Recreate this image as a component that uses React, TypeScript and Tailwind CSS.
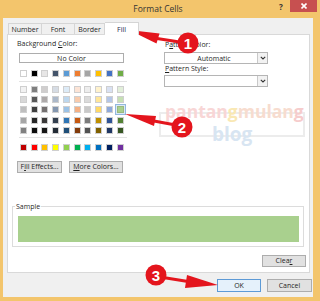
import React from "react";

const themeRow = ["#FFFFFF", "#000000", "#E7E6E6", "#44546A", "#5B9BD5", "#ED7D31", "#A5A5A5", "#FFC000", "#4472C4", "#70AD47"];
const tints = [
  ["#F2F2F2", "#7F7F7F", "#D0CECE", "#D6DCE4", "#DDEBF7", "#FCE4D6", "#EDEDED", "#FFF2CC", "#D9E1F2", "#E2EFDA"],
  ["#D9D9D9", "#595959", "#AEAAAA", "#ACB9CA", "#BDD7EE", "#F8CBAD", "#DBDBDB", "#FFE699", "#B4C6E7", "#C6E0B4"],
  ["#BFBFBF", "#404040", "#757171", "#8497B0", "#9BC2E6", "#F4B084", "#C9C9C9", "#FFD966", "#8EA9DB", "#A9D08E"],
  ["#A6A6A6", "#262626", "#3A3838", "#333F4F", "#2F75B5", "#C65911", "#7B7B7B", "#BF8F00", "#305496", "#548235"],
  ["#808080", "#0D0D0D", "#161616", "#222B35", "#1F4E78", "#833C0C", "#525252", "#806000", "#203764", "#375623"],
];
const standard = ["#C00000", "#FF0000", "#FFC000", "#FFFF00", "#92D050", "#00B050", "#00B0F0", "#0070C0", "#002060", "#7030A0"];

function Swatch({ color, selected }: { color: string; selected?: boolean }) {
  return (
    <div
      className={
        selected
          ? "w-[7px] h-[7px] border border-[#9ab97f] shadow-[0_0_0_1px_#dbe9f6,0_0_0_2px_#93b8de]"
          : "w-[7px] h-[7px] border border-[#cfcfcf]"
      }
      style={{ backgroundColor: color }}
    />
  );
}

function SwatchRow({ colors, selectedIndex }: { colors: string[]; selectedIndex?: number }) {
  return (
    <div className="grid grid-cols-[repeat(10,7px)] gap-x-[3.74px]">
      {colors.map((c, i) => (
        <Swatch key={i} color={c} selected={i === selectedIndex} />
      ))}
    </div>
  );
}

function Dropdown({ value }: { value?: string }) {
  return (
    <div className="flex w-[104px] h-[12px] border border-[#b5b5b5] bg-white">
      <div className="flex-1 flex items-center justify-center text-[7px] leading-none pl-[6px]">{value}</div>
      <div className="w-[10px] h-full border-l border-[#c9c9c9] bg-[#f2f2f2] flex items-center justify-center">
        <svg width="6" height="4" viewBox="0 0 6 4">
          <path d="M0.8 0.8 L3 3 L5.2 0.8" fill="none" stroke="#333" strokeWidth="1.1" />
        </svg>
      </div>
    </div>
  );
}

function Button({ children, className }: { children: React.ReactNode; className: string }) {
  return (
    <div className={"flex items-center justify-center text-[7px] leading-none border " + className}>
      {children}
    </div>
  );
}

export default function App() {
  return (
    <div className="relative w-[320px] h-[301px] overflow-hidden bg-[#f3c56c] font-['Open_Sans',sans-serif] text-[#1f1f1f]">
      {/* title bar */}
      <div className="relative h-[18px] flex items-center justify-center pr-[4px]">
        <span className="text-[8.5px] leading-none text-[#333]">Format Cells</span>
        <span className="absolute left-[279px] top-[3px] text-[8px] leading-none font-bold text-[#333]">?</span>
        <div className="absolute left-[290px] top-0 w-[27px] h-[12px] bg-[#c75050] flex items-center justify-center">
          <svg width="6" height="6" viewBox="0 0 6 6">
            <path d="M0.5 0.5 L5.5 5.5 M5.5 0.5 L0.5 5.5" stroke="#fff" strokeWidth="1.6" />
          </svg>
        </div>
      </div>

      {/* dialog body */}
      <div className="ml-[3px] w-[310px] h-[279px] bg-[#f0f0f0] pt-[4px] pl-[4px]">
        {/* tabs */}
        <div className="flex items-end h-[12px] ml-[1px]">
          <div className="w-[34px] h-[11px] border border-b-0 border-[#d5d5d5] bg-[#f0f0f0] flex items-center justify-center text-[7px] leading-none">
            Number
          </div>
          <div className="w-[33px] h-[11px] border border-l-0 border-b-0 border-[#d5d5d5] bg-[#f0f0f0] flex items-center justify-center text-[7px] leading-none">
            Font
          </div>
          <div className="w-[30px] h-[11px] border border-l-0 border-b-0 border-[#d5d5d5] bg-[#f0f0f0] flex items-center justify-center text-[7px] leading-none">
            Border
          </div>
          <div className="relative z-10 w-[34px] h-[13px] -mb-px border border-l-0 border-b-0 border-[#d5d5d5] bg-white flex items-center justify-center text-[7px] leading-none text-[#1a2b4a]">
            Fill
          </div>
        </div>

        {/* tab panel */}
        <div className="w-[303px] h-[239px] border border-[#d9d9d9] bg-white">
          <div className="flex pt-[4px] pl-[9px]">
            {/* background colour picker */}
            <div className="w-[147px] flex flex-col">
              <div className="h-[10px] text-[7px] leading-[10px]">
                Background <span className="underline">C</span>olor:
              </div>
              <div className="mt-[4px] ml-[2px] w-[105px] h-[10px] border border-[#adadad] flex items-center justify-center text-[7px] leading-none">
                No Color
              </div>
              <div className="mt-[7px] ml-[3px]">
                <SwatchRow colors={themeRow} />
              </div>
              <div className="mt-[4px] ml-[2px] w-[108px] h-px bg-[#e3e3e3]" />
              <div className="mt-[4px] ml-[3px] flex flex-col gap-y-[3.2px]">
                {tints.map((row, r) => (
                  <SwatchRow key={r} colors={row} selectedIndex={r === 2 ? 9 : undefined} />
                ))}
              </div>
              <div className="mt-[3px] ml-[2px] w-[108px] h-px bg-[#e3e3e3]" />
              <div className="mt-[6px] ml-[3px]">
                <SwatchRow colors={standard} />
              </div>
              <div className="mt-[10px] flex gap-[7px]">
                <Button className="w-[45px] h-[12px] border-[#adadad] bg-[#e1e1e1]">
                  F<span className="underline">i</span>ll Effects...
                </Button>
                <Button className="w-[54px] h-[12px] border-[#adadad] bg-[#e1e1e1]">
                  <span className="underline">M</span>ore Colors...
                </Button>
              </div>
            </div>

            {/* pattern settings */}
            <div className="w-[104px] flex flex-col">
              <div className="mt-[1px] h-[10px] pl-[1px] text-[7px] leading-[10px]">
                P<span className="underline">a</span>ttern Color:
              </div>
              <div className="mt-[2px]">
                <Dropdown value="Automatic" />
              </div>
              <div className="h-[10px] pl-[1px] text-[7px] leading-[10px]">
                <span className="underline">P</span>attern Style:
              </div>
              <div className="mt-[1px]">
                <Dropdown />
              </div>
            </div>
          </div>

          {/* sample */}
          <fieldset className="mt-[30px] ml-[4px] w-[292px] border border-[#dcdcdc] pb-[4px]">
            <legend className="ml-[2px] px-[1px] text-[7px] leading-[8px]">Sample</legend>
            <div className="mt-[5px] ml-[5px] w-[281px] h-[26px] bg-[#a9d08e]" />
          </fieldset>

          <div className="mt-[8px] ml-[254px]">
            <Button className="w-[44px] h-[12px] border-[#adadad] bg-[#e1e1e1]">
              Clea<span className="underline">r</span>
            </Button>
          </div>
        </div>

        {/* dialog buttons */}
        <div className="mt-[6px] ml-[210px] flex gap-[6px]">
          <Button className="w-[44px] h-[13px] border-[#5d9ad6] bg-[#e5f1fb]">OK</Button>
          <Button className="w-[45px] h-[13px] border-[#adadad] bg-[#e1e1e1]">Cancel</Button>
        </div>
      </div>

      {/* blog watermark */}
      <div className="absolute left-[159px] top-[112px] w-[146px] h-[25px] border-2 border-[#ececec] pointer-events-none" />
      <div className="absolute left-[165px] top-[103px] text-[17.5px] leading-none font-bold pointer-events-none">
        <span className="text-[#f8d6d6]">pantan</span>
        <span className="text-[#f9e8b4]">g</span>
        <span className="text-[#f7dccf]">mulan</span>
        <span className="text-[#f6cccc]">g</span>
      </div>
      <div className="absolute left-[212px] top-[125px] text-[19px] leading-none font-bold text-[#d8e5f2] pointer-events-none">
        blog
      </div>

      {/* step markers */}
      <svg className="absolute left-0 top-0 pointer-events-none" width="320" height="301" viewBox="0 0 320 301">
        <g fill="#e4151d" stroke="none">
          <line x1="157" y1="38.5" x2="186" y2="43" stroke="#e4151d" strokeWidth="3" />
          <polygon points="129,30 159.5,33.5 156.5,43.5" />
          <circle cx="188" cy="43" r="10.5" />

          <line x1="154" y1="121" x2="181" y2="126" stroke="#e4151d" strokeWidth="3" />
          <polygon points="125,114 156,116 154,126" />
          <circle cx="182" cy="127" r="10.5" />

          <line x1="160" y1="277" x2="188" y2="281.5" stroke="#e4151d" strokeWidth="3" />
          <polygon points="218,285 187,275 185,288" />
          <circle cx="156" cy="275" r="10.5" />
        </g>
        <g fill="#fff" fontFamily="'Liberation Sans', Arial, sans-serif" fontWeight="bold" fontSize="15" textAnchor="middle">
          <text x="188" y="48.5">1</text>
          <text x="182" y="132.5">2</text>
          <text x="156" y="280.5">3</text>
        </g>
      </svg>
    </div>
  );
}
